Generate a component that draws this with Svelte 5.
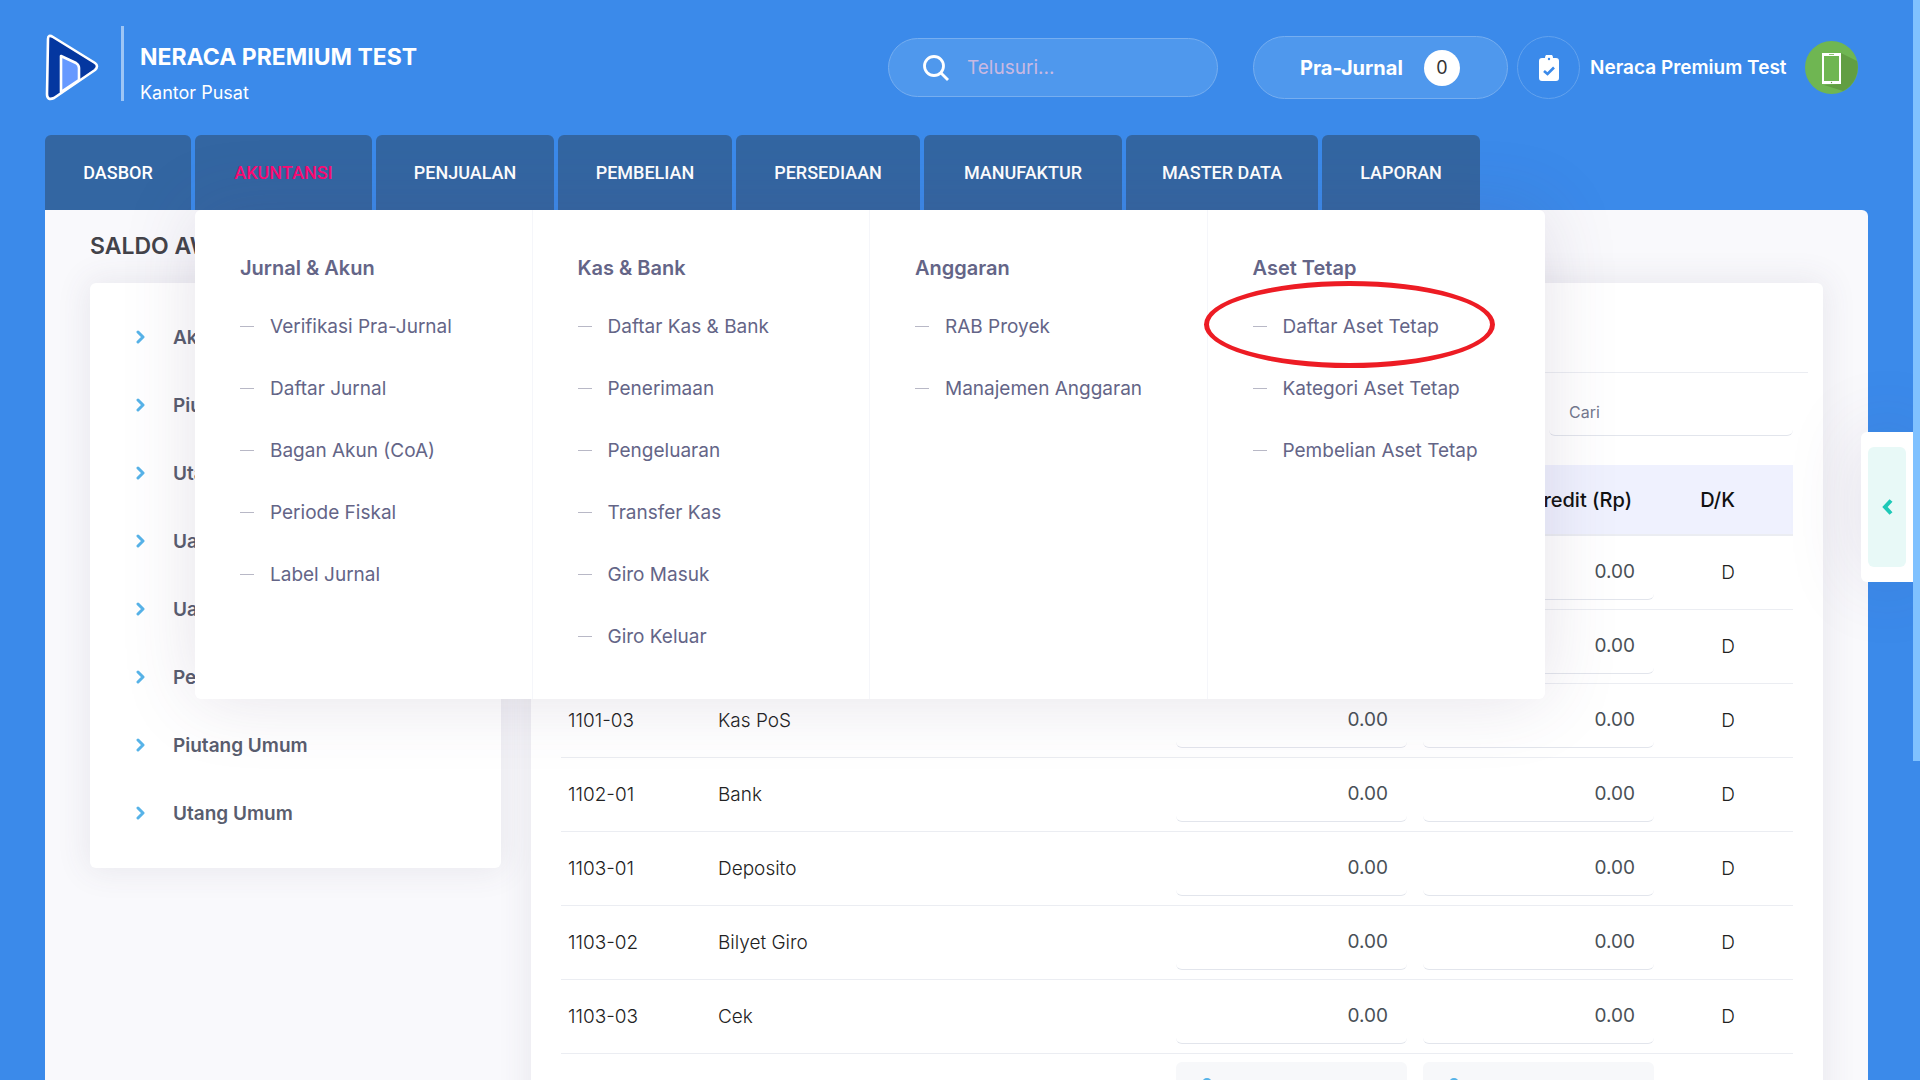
<script>
  const nav = ["DASBOR", "AKUNTANSI", "PENJUALAN", "PEMBELIAN", "PERSEDIAAN", "MANUFAKTUR", "MASTER DATA", "LAPORAN"];
  let active = $state("AKUNTANSI");

  const menu = [
    {
      title: "Jurnal & Akun",
      items: ["Verifikasi Pra-Jurnal", "Daftar Jurnal", "Bagan Akun (CoA)", "Periode Fiskal", "Label Jurnal"],
    },
    {
      title: "Kas & Bank",
      items: ["Daftar Kas & Bank", "Penerimaan", "Pengeluaran", "Transfer Kas", "Giro Masuk", "Giro Keluar"],
    },
    { title: "Anggaran", items: ["RAB Proyek", "Manajemen Anggaran"] },
    {
      title: "Aset Tetap",
      items: ["Daftar Aset Tetap", "Kategori Aset Tetap", "Pembelian Aset Tetap"],
    },
  ];

  const sections = ["Akun", "Piutang", "Utang", "Uang Muka", "Uang Muka", "Persediaan", "Piutang Umum", "Utang Umum"];

  const rows = [
    { code: "", name: "" },
    { code: "", name: "" },
    { code: "1101-03", name: "Kas PoS" },
    { code: "1102-01", name: "Bank" },
    { code: "1103-01", name: "Deposito" },
    { code: "1103-02", name: "Bilyet Giro" },
    { code: "1103-03", name: "Cek" },
  ];
</script>

<div class="page">
  <header class="topbar">
    <a class="logo" href="#home" aria-label="Neraca">
      <svg width="54" height="68" viewBox="0 0 54 68">
        <path d="M3 5Q3 0 8 3L50 29Q54 32 50 36L9 64Q2 67 2 60Z" fill="#0437a0" stroke="#fff" stroke-width="2.6" stroke-linejoin="round" />
        <path d="M16 58V22L31 29Q34 31 34 34V46Z" fill="#6699ff" stroke="#fff" stroke-width="2.6" stroke-linejoin="round" />
      </svg>
    </a>
    <div class="company">
      <strong>NERACA PREMIUM TEST</strong>
      <span>Kantor Pusat</span>
    </div>
    <label class="search">
      <svg width="26" height="26" viewBox="0 0 26 26" fill="none" stroke="#fff" stroke-width="2.8">
        <circle cx="11" cy="11" r="9.5" />
        <path d="M17.500 17.500 25 25" />
      </svg>
      <input type="text" placeholder="Telusuri..." aria-label="Telusuri" />
    </label>
    <button class="draft">Pra-Jurnal <span class="count">0</span></button>
    <button class="task" aria-label="Tugas">
      <svg width="20" height="26" viewBox="0 0 20 26">
        <path d="M3 3H6A4 4 0 0 1 14 3H17Q20 3 20 6V23Q20 26 17 26H3Q0 26 0 23V6Q0 3 3 3Z" fill="#fff" />
        <circle cx="10" cy="4" r="1.2" fill="#3b8aea" />
        <path d="M5 16 8.500 19 15 12.500" fill="none" stroke="#3b8aea" stroke-width="2.6" />
      </svg>
    </button>
    <a class="user" href="#profile">
      <span>Neraca Premium Test</span>
      <svg width="53" height="53" viewBox="0 0 53 53">
        <circle cx="26.500" cy="26.500" r="26.500" fill="#6fb652" />
        <path d="M36 12 52 20A26.500 26.500 0 0 1 38 50L19 44 36 43Z" fill="#619e42" />
        <path d="M17 12H36V43H17Z" fill="#fff" />
        <path d="M19 15H34V40H19Z" fill="#6fb652" />
        <path d="M24 13.500H29" stroke="#6fb652" stroke-width="0.8" />
        <circle cx="26.500" cy="41.500" r="0.7" fill="#619e42" />
      </svg>
    </a>
  </header>

  <nav class="tabs">
    {#each nav as tab}
      <button class:active={tab === active} onclick={() => (active = tab)}>{tab}</button>
    {/each}
  </nav>

  <main class="content">
    <h1>SALDO AWAL</h1>
    <div class="columns">
      <ul class="card sections">
        {#each sections as section}
          <li>
            <a href="#section">
              <svg width="9" height="14" viewBox="0 0 9 14" fill="none" stroke="#57b3e8" stroke-width="3" stroke-linecap="round" stroke-linejoin="round">
                <path d="M2 2 7 7 2 12" />
              </svg>
              {section}
            </a>
          </li>
        {/each}
      </ul>

      <section class="card accounts">
        <h2>Akun</h2>
        <div class="filter">
          <input type="text" placeholder="Cari" aria-label="Cari" />
        </div>
        <table>
          <thead>
            <tr>
              <th class="code">Kode</th>
              <th>Nama Akun</th>
              <th class="amount">Debit (Rp)</th>
              <th class="amount">Kredit (Rp)</th>
              <th class="side">D/K</th>
            </tr>
          </thead>
          <tbody>
            {#each rows as row}
              <tr>
                <td>{row.code}</td>
                <td>{row.name}</td>
                <td class="field"><input value="0.00" aria-label="Debit {row.code}" /></td>
                <td class="field"><input value="0.00" aria-label="Kredit {row.code}" /></td>
                <td class="side">D</td>
              </tr>
            {/each}
            <tr>
              <td></td>
              <td></td>
              {#each [0, 1] as _}
                <td class="field">
                  <div class="locked">
                    <svg width="14" height="18" viewBox="0 0 14 18">
                      <path d="M3 8V5A4 4 0 0 1 11 5V8" fill="none" stroke="#57b3e8" stroke-width="2" />
                      <rect y="8" width="14" height="10" rx="2" fill="#57b3e8" />
                    </svg>
                  </div>
                </td>
              {/each}
              <td></td>
            </tr>
          </tbody>
        </table>
      </section>
    </div>
  </main>

  <div class="mega">
    {#each menu as group}
      <div class="group">
        <h3>{group.title}</h3>
        <ul>
          {#each group.items as item}
            <li class:marked={item === "Daftar Aset Tetap"}><a href="#menu">{item}</a></li>
          {/each}
        </ul>
      </div>
    {/each}
  </div>

  <div class="drawer">
    <button aria-label="Buka panel">
      <svg width="12" height="16" viewBox="0 0 12 16" fill="none" stroke="#1dc9b7" stroke-width="4">
        <path d="M10 1.500 4 8 10 14.500" />
      </svg>
    </button>
  </div>
  <div class="scrollbar"></div>
</div>

<style>
  :global(body) {
    margin: 0;
    background: #3b8aea;
  }

  .page {
    position: relative;
    height: 100vh;
    overflow: hidden;
    padding: 0 52px 0 45px;
    box-sizing: border-box;
    font-family: Inter, Roboto, sans-serif;
    font-size: 19px;
    color: #222;
  }

  .page * {
    box-sizing: border-box;
  }

  button,
  input {
    font: inherit;
    border: 0;
    outline: 0;
  }

  a {
    color: inherit;
    text-decoration: none;
  }

  h1,
  h2,
  h3,
  ul {
    margin: 0;
    padding: 0;
    list-style: none;
  }

  /* top bar */
  .topbar {
    display: flex;
    align-items: center;
    height: 135px;
    color: #fff;
  }

  .logo {
    display: flex;
    margin-right: 22px;
  }

  .company {
    display: flex;
    flex-direction: column;
    justify-content: flex-end;
    gap: 20px;
    height: 75px;
    padding-left: 16px;
    border-left: 3px solid #9dc5f5;
    margin: 0 auto 8px 0;
    line-height: 16px;
    font-size: 18px;
  }

  .company strong {
    font-size: 23px;
  }

  .search {
    display: flex;
    align-items: center;
    gap: 18px;
    width: 330px;
    height: 59px;
    padding: 0 34px;
    border: 1px solid #76aef0;
    border-radius: 30px;
    background: #4f98ed;
    margin-right: 35px;
  }

  .search svg {
    flex: none;
  }

  .search input {
    width: 100%;
    min-width: 0;
    padding: 0;
    background: none;
    color: #fff;
  }

  .search input::placeholder {
    color: #c9b9e2;
  }

  .draft {
    display: flex;
    align-items: center;
    gap: 21px;
    width: 255px;
    height: 63px;
    padding: 0 46px;
    border: 1px solid #76aef0;
    border-radius: 32px;
    background: #4f98ed;
    color: #fff;
    font-size: 20px;
    font-weight: 700;
    margin-right: 9px;
    white-space: nowrap;
  }

  .count {
    width: 36px;
    height: 36px;
    border-radius: 50%;
    background: #fff;
    color: #333;
    font-size: 18px;
    font-weight: 400;
    line-height: 36px;
  }

  .task {
    display: flex;
    align-items: center;
    justify-content: center;
    width: 63px;
    height: 63px;
    padding: 0;
    border: 1px solid #62a2ee;
    border-radius: 50%;
    background: none;
    margin-right: 10px;
  }

  .user {
    display: flex;
    align-items: center;
    justify-content: space-between;
    width: 268px;
    margin-right: 10px;
    font-weight: 600;
    white-space: nowrap;
  }

  /* tabs */
  .tabs {
    display: grid;
    grid-template-columns: 146px 177px 178px 174px 184px 198px 192px 158px;
    gap: 4px;
    height: 75px;
  }

  .tabs button {
    padding: 0;
    border-radius: 6px 6px 0 0;
    background: #3366a2;
    color: #fff;
    font-family: Roboto, sans-serif;
    font-size: 18px;
    font-weight: 500;
  }

  .tabs button.active {
    color: #fd0a72;
  }

  /* content */
  .content {
    padding: 18px 45px 0;
    min-height: 1000px;
    border-radius: 0 6px 0 0;
    background: #f9f9fc;
  }

  h1 {
    font-size: 23px;
    font-weight: 600;
    line-height: 36px;
    color: #434349;
  }

  .columns {
    display: flex;
    align-items: flex-start;
    gap: 30px;
    margin-top: 19px;
  }

  .card {
    border-radius: 6px;
    background: #fff;
    box-shadow: 0 0 32px 4px rgba(82, 63, 105, 0.09);
  }

  .sections {
    width: 411px;
    padding: 20px 46px 21px;
  }

  .sections a {
    display: flex;
    align-items: center;
    gap: 28px;
    height: 68px;
    color: #595d6e;
    font-weight: 600;
  }

  .accounts {
    flex: 1;
    min-height: 1000px;
    padding: 0 15px;
  }

  h2 {
    height: 90px;
    padding: 0 15px;
    border-bottom: 1px solid #ebedf2;
    font-size: 19px;
    line-height: 90px;
    font-weight: 500;
  }

  .filter {
    display: flex;
    justify-content: flex-end;
    height: 92px;
    padding: 16px 15px 0;
  }

  .filter input {
    width: 244px;
    height: 47px;
    padding: 0 20px;
    border-bottom: 1px solid #e2e5ec;
    border-radius: 6px;
    font-size: 16px;
    background: none;
  }

  .filter input::placeholder {
    color: #74788d;
  }

  table {
    width: calc(100% - 30px);
    margin: 0 15px;
    border-collapse: collapse;
    table-layout: fixed;
  }

  th {
    height: 70px;
    padding: 0 7px;
    background: #eff1fe;
    border-bottom: 2px solid #ebedf2;
    font-size: 20px;
    font-weight: 500;
    color: #111;
    text-align: left;
  }

  th.code {
    width: 150px;
  }

  th.amount {
    width: 247px;
    padding-right: 30px;
    text-align: right;
  }

  th.side {
    width: 131px;
  }

  td {
    height: 74px;
    padding: 0 7px;
    border-bottom: 1px solid #ebedf2;
    font-weight: 300;
  }

  td.field {
    padding: 0 8px;
  }

  .side {
    padding-right: 58px;
    text-align: right;
  }

  .field input {
    display: block;
    width: 100%;
    height: 56px;
    padding: 0 19px;
    border-bottom: 1px solid #e2e5ec;
    border-radius: 6px;
    background: none;
    color: #495057;
    font-weight: 400;
    text-align: right;
  }

  .locked {
    height: 56px;
    padding: 16px 24px;
    border-radius: 6px;
    background: #f7f8fa;
  }

  /* open menu under the tabs */
  .mega {
    position: absolute;
    top: 210px;
    left: 195px;
    display: grid;
    grid-template-columns: repeat(4, 1fr);
    width: 1350px;
    height: 489px;
    border-radius: 6px;
    background: #fff;
    box-shadow: 0 0 75px 0 rgba(82, 63, 105, 0.15);
  }

  .group {
    padding: 40px 0 0 45px;
    border-right: 1px solid #f5f6fa;
    color: #646587;
  }

  .group:last-child {
    border-right: 0;
  }

  h3 {
    margin-bottom: 8px;
    font-size: 20px;
    font-weight: 600;
    line-height: 37px;
  }

  .group a {
    display: flex;
    align-items: center;
    gap: 16px;
    height: 62px;
    white-space: nowrap;
  }

  .group a::before {
    content: "";
    width: 14px;
    height: 1px;
    background: #b8b8c6;
  }

  .marked {
    position: relative;
  }

  /* hand-drawn highlight */
  .marked::after {
    content: "";
    position: absolute;
    box-sizing: border-box;
    left: -49px;
    top: -14px;
    width: 291px;
    height: 87px;
    border: 5px solid #ed1c24;
    border-radius: 50%;
    pointer-events: none;
  }

  .drawer {
    position: absolute;
    top: 432px;
    right: 7px;
    display: flex;
    width: 52px;
    height: 150px;
    padding: 15px 7px;
    border-radius: 6px 0 0 6px;
    background: #fff;
    box-shadow: 0 0 75px 0 rgba(82, 63, 105, 0.15);
  }

  .drawer button {
    display: flex;
    align-items: center;
    justify-content: center;
    width: 100%;
    padding: 0;
    border-radius: 6px;
    background: #e8f9f7;
  }

  .scrollbar {
    position: absolute;
    top: 0;
    right: 0;
    width: 7px;
    height: 761px;
    background: #7fc1ff;
  }
</style>
